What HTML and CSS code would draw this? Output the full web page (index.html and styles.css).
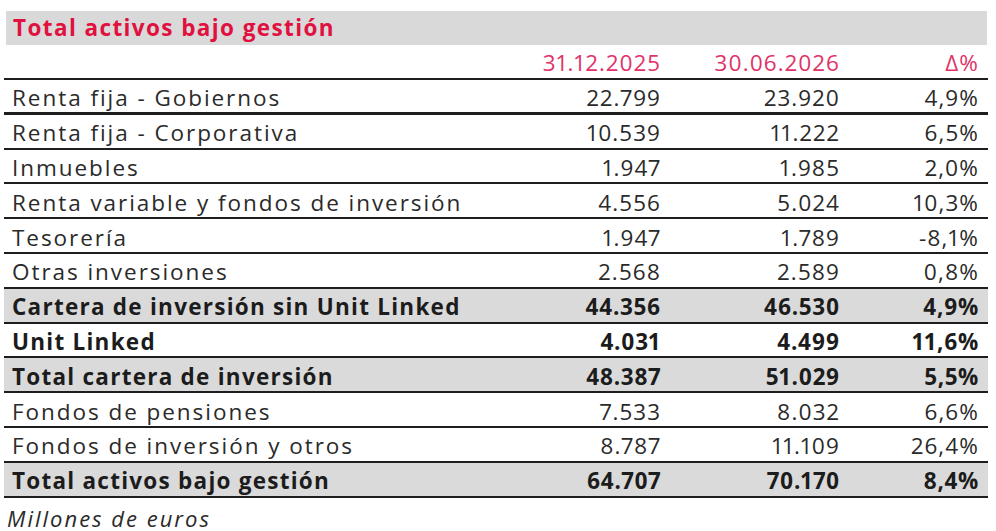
FILE: index.html
```html
<!DOCTYPE html>
<html lang="es">
<head>
<meta charset="utf-8">
<title>Total activos bajo gestión</title>
<link rel="stylesheet" href="styles.css">
</head>
<body>
<div class="wrap">
  <div class="title">Total activos bajo gestión</div>
  <table class="tbl">
    <colgroup>
      <col class="c-label">
      <col class="c-a">
      <col class="c-b">
      <col class="c-pct">
    </colgroup>
    <thead>
      <tr class="head">
        <th class="label"></th>
        <th class="num">31.12.2025</th>
        <th class="num">30.06.2026</th>
        <th class="num">Δ%</th>
      </tr>
    </thead>
    <tbody>
      <tr class="thick"><td class="label">Renta fija - Gobiernos</td><td class="num">22.799</td><td class="num">23.920</td><td class="num">4,9%</td></tr>
      <tr><td class="label">Renta fija - Corporativa</td><td class="num">10.539</td><td class="num">11.222</td><td class="num">6,5%</td></tr>
      <tr><td class="label">Inmuebles</td><td class="num">1.947</td><td class="num">1.985</td><td class="num">2,0%</td></tr>
      <tr><td class="label">Renta variable y fondos de inversión</td><td class="num">4.556</td><td class="num">5.024</td><td class="num">10,3%</td></tr>
      <tr><td class="label">Tesorería</td><td class="num">1.947</td><td class="num">1.789</td><td class="num">-8,1%</td></tr>
      <tr><td class="label">Otras inversiones</td><td class="num">2.568</td><td class="num">2.589</td><td class="num">0,8%</td></tr>
      <tr class="bold shade"><td class="label">Cartera de inversión sin Unit Linked</td><td class="num">44.356</td><td class="num">46.530</td><td class="num">4,9%</td></tr>
      <tr class="bold"><td class="label">Unit Linked</td><td class="num">4.031</td><td class="num">4.499</td><td class="num">11,6%</td></tr>
      <tr class="bold shade"><td class="label">Total cartera de inversión</td><td class="num">48.387</td><td class="num">51.029</td><td class="num">5,5%</td></tr>
      <tr><td class="label">Fondos de pensiones</td><td class="num">7.533</td><td class="num">8.032</td><td class="num">6,6%</td></tr>
      <tr><td class="label">Fondos de inversión y otros</td><td class="num">8.787</td><td class="num">11.109</td><td class="num">26,4%</td></tr>
      <tr class="bold shade"><td class="label">Total activos bajo gestión</td><td class="num">64.707</td><td class="num">70.170</td><td class="num">8,4%</td></tr>
    </tbody>
  </table>
  <div class="note">Millones de euros</div>
</div>
</body>
</html>
```

FILE: styles.css
```css
html, body {
  margin: 0;
  padding: 0;
  background: #ffffff;
}

body {
  font-family: "Open Sans", "Noto Sans", sans-serif;
  color: #2a2a2a;
}

.wrap {
  width: 984px;
  margin-left: 4px;
  padding-top: 11px;
}

.title {
  margin: 0 1px 0 2px;
  height: 34px;
  background: #d9d9d9;
  color: #e0103f;
  font-weight: 700;
  font-size: 22.5px;
  line-height: 34px;
  padding-left: 7px;
  letter-spacing: 1.4px;
}

.tbl {
  width: 984px;
  border-collapse: collapse;
  table-layout: fixed;
}

.c-label { width: 496px; }
.c-a { width: 170px; }
.c-b { width: 179px; }
.c-pct { width: 139px; }

.tbl th,
.tbl td {
  padding: 0;
  font-size: 22.5px;
  white-space: nowrap;
}

.tbl .label {
  text-align: left;
  padding-left: 8px;
  letter-spacing: 1.95px;
}

.tbl .num {
  text-align: right;
  padding-right: 9px;
  letter-spacing: 1.1px;
  font-variant-numeric: proportional-nums;
}

.head th {
  height: 34px;
  box-sizing: border-box;
  vertical-align: bottom;
  font-weight: 400;
  color: #e0336a;
  border-bottom: 2px solid #1e1e1e;
  line-height: 30px;
}

.tbl tbody td {
  height: 34.8px;
  box-sizing: border-box;
  line-height: 26px;
  padding-top: 4px;
  vertical-align: middle;
  border-bottom: 2px solid #1e1e1e;
}

.tbl tbody tr.thick td {
  border-bottom-width: 3px;
}

.tbl tr.bold td {
  font-weight: 700;
  color: #1c1c1c;
}

.tbl tr.bold td.label {
  letter-spacing: 1.25px;
}

.tbl tr.bold td.num {
  letter-spacing: 0.6px;
}

.tbl tr.shade td {
  background: #dadada;
}

.note {
  font-style: italic;
  font-size: 22px;
  letter-spacing: 2px;
  color: #2a2a2a;
  padding-left: 3px;
  padding-top: 5px;
}
```
